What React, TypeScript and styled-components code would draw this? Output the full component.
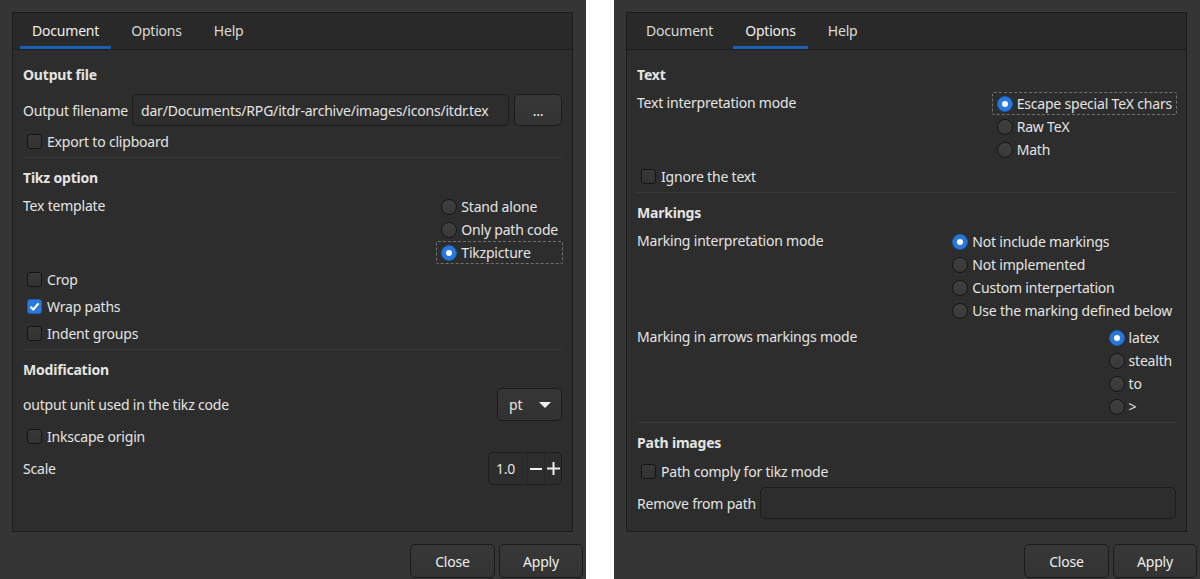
import * as React from "react";
import styled, { createGlobalStyle } from "styled-components";

const GlobalStyle = createGlobalStyle`
  html, body {
    margin: 0;
    padding: 0;
    background: #ffffff;
  }
  body {
    font-family: "Noto Sans", "DejaVu Sans", sans-serif;
    font-size: 14px;
    letter-spacing: -0.2px;
    color: #e4e4e2;
  }
`;

const Page = styled.div`
  width: 1200px;
  height: 579px;
  display: flex;
  justify-content: space-between;
  background: #ffffff;
  overflow: hidden;
`;

const Window = styled.div`
  width: 586px;
  height: 579px;
  box-sizing: border-box;
  padding-top: 12px;
  background: #353535;
  display: flex;
  flex-direction: column;
`;

const Notebook = styled.div`
  height: 520px;
  margin: 0 13px 0 12px;
  box-sizing: border-box;
  border: 1px solid #1c1c1c;
  background: #2d2d2d;
  display: flex;
  flex-direction: column;
`;

const TabBar = styled.div`
  height: 36px;
  display: flex;
  gap: 8px;
  padding: 0 7px;
  background: #292929;
  border-bottom: 1px solid #1c1c1c;
`;

const Tab = styled.div<{ $active?: boolean }>`
  display: flex;
  align-items: center;
  padding: 0 12px 1px;
  color: ${(p) => (p.$active ? "#eeeeec" : "#dadad8")};
  box-shadow: ${(p) => (p.$active ? "inset 0 -3px 0 #1b5fb4" : "none")};
`;

const Content = styled.div`
  flex: 1;
  padding: 5px 10px 0;
  display: flex;
  flex-direction: column;
`;

const Section = styled.div`
  display: flex;
  flex-direction: column;
  gap: 4px;
  padding: 7px 0 4px;
  border-bottom: 1px solid #393939;

  &:last-child {
    border-bottom: none;
  }
`;

const Heading = styled.div`
  height: 24px;
  line-height: 25px;
  font-weight: 700;
  margin-bottom: 2px;
`;

const Row = styled.div<{ $top?: boolean; $mt?: number }>`
  display: flex;
  align-items: ${(p) => (p.$top ? "flex-start" : "center")};
  justify-content: space-between;
  gap: 4px;
  margin-top: ${(p) => p.$mt ?? 0}px;
`;

const Label = styled.div`
  line-height: 21px;
  white-space: nowrap;
`;

const Entry = styled.div`
  flex: 1;
  height: 32px;
  box-sizing: border-box;
  display: flex;
  align-items: center;
  padding: 0 8px;
  border: 1px solid #1c1c1c;
  border-radius: 5px;
  background: #2d2d2d;
  overflow: hidden;
  white-space: nowrap;
`;

const Button = styled.div<{ $w?: number; $h?: number }>`
  width: ${(p) => p.$w ?? 84}px;
  height: ${(p) => p.$h ?? 34}px;
  box-sizing: border-box;
  display: flex;
  align-items: center;
  justify-content: center;
  border: 1px solid #1b1b1b;
  border-radius: 5px;
  background: linear-gradient(#383838, #333333);
  color: #eeeeec;
  flex-shrink: 0;
`;

const CheckRow = styled.label`
  height: 23px;
  display: flex;
  align-items: center;
  gap: 5px;
  padding-left: 4px;
`;

const Box = styled.span<{ $on?: boolean }>`
  width: 15px;
  height: 15px;
  box-sizing: border-box;
  border-radius: 3px;
  border: 1px solid ${(p) => (p.$on ? "#1a5fb4" : "#151515")};
  background: ${(p) => (p.$on ? "#2b78dc" : "linear-gradient(#383838, #323232)")};
  display: flex;
  align-items: center;
  justify-content: center;
`;

const RadioGroup = styled.div`
  display: flex;
  flex-direction: column;
  margin-right: -1px;
`;

const RadioItem = styled.div<{ $focus?: boolean }>`
  height: 23px;
  box-sizing: border-box;
  display: flex;
  align-items: center;
  gap: 4px;
  padding: 0 4px;
  border: 1px ${(p) => (p.$focus ? "dashed rgba(238, 238, 236, 0.35)" : "solid transparent")};
  border-radius: 2px;
  white-space: nowrap;
`;

const Dot = styled.span<{ $on?: boolean }>`
  width: 16px;
  height: 16px;
  box-sizing: border-box;
  border-radius: 50%;
  border: 1px solid ${(p) => (p.$on ? "#1a5fb4" : "#161616")};
  background: ${(p) => (p.$on ? "#2b78dc" : "linear-gradient(#404040, #383838)")};
  display: flex;
  align-items: center;
  justify-content: center;

  &::after {
    content: "";
    width: 6px;
    height: 6px;
    border-radius: 50%;
    background: #ffffff;
    display: ${(p) => (p.$on ? "block" : "none")};
  }
`;

const Combo = styled.div`
  width: 65px;
  height: 33px;
  box-sizing: border-box;
  display: flex;
  align-items: center;
  justify-content: space-between;
  padding: 0 10px 0 11px;
  border: 1px solid #1b1b1b;
  border-radius: 5px;
  background: linear-gradient(#363636, #323232);
`;

const Spin = styled.div`
  height: 33px;
  box-sizing: border-box;
  display: flex;
  border: 1px solid #1c1c1c;
  border-radius: 5px;
  background: #2d2d2d;
`;

const SpinValue = styled.div`
  width: 38px;
  display: flex;
  align-items: center;
  padding-left: 7px;
  box-sizing: border-box;
`;

const SpinButton = styled.div`
  width: 16px;
  display: flex;
  align-items: center;
  justify-content: center;
  border-left: 1px solid #262626;
`;

const ActionBar = styled.div`
  display: flex;
  justify-content: flex-end;
  gap: 4px;
  padding: 12px 3px 0 0;
`;

const Check = ({ on, children }: { on?: boolean; children: React.ReactNode }) => (
  <CheckRow>
    <Box $on={on}>
      {on && (
        <svg width="11" height="11" viewBox="0 0 11 11">
          <path d="M1.5 5.8 L4.3 8.5 L9.6 2.4" stroke="#fff" strokeWidth="2.2" fill="none" strokeLinejoin="round" />
        </svg>
      )}
    </Box>
    {children}
  </CheckRow>
);

interface RadioOption {
  label: string;
  on?: boolean;
  focus?: boolean;
}

const Radios = ({ items }: { items: RadioOption[] }) => (
  <RadioGroup>
    {items.map((it) => (
      <RadioItem key={it.label} $focus={it.focus}>
        <Dot $on={it.on} />
        {it.label}
      </RadioItem>
    ))}
  </RadioGroup>
);

const Tabs = ({ active }: { active: string }) => (
  <TabBar>
    {["Document", "Options", "Help"].map((t) => (
      <Tab key={t} $active={t === active}>
        {t}
      </Tab>
    ))}
  </TabBar>
);

const Actions = () => (
  <ActionBar>
    <Button $w={85}>Close</Button>
    <Button>Apply</Button>
  </ActionBar>
);

const DocumentPanel = () => (
  <Window>
    <Notebook>
      <Tabs active="Document" />
      <Content>
        <Section>
          <Heading>Output file</Heading>
          <Row $mt={2}>
            <Label>Output filename</Label>
            <Entry>dar/Documents/RPG/itdr-archive/images/icons/itdr.tex</Entry>
            <Button $w={48} $h={32} style={{ marginLeft: 1 }}>
              ...
            </Button>
          </Row>
          <Check>Export to clipboard</Check>
        </Section>
        <Section>
          <Heading>Tikz option</Heading>
          <Row $top>
            <Label>Tex template</Label>
            <Radios
              items={[
                { label: "Stand alone" },
                { label: "Only path code" },
                { label: "Tikzpicture", on: true, focus: true },
              ]}
            />
          </Row>
          <Check>Crop</Check>
          <Check on>Wrap paths</Check>
          <Check>Indent groups</Check>
        </Section>
        <Section>
          <Heading>Modification</Heading>
          <Row $mt={1}>
            <Label>output unit used in the tikz code</Label>
            <Combo>
              pt
              <svg width="12" height="6" viewBox="0 0 12 6">
                <polygon points="0,0 12,0 6,6" fill="#eeeeec" />
              </svg>
            </Combo>
          </Row>
          <Check>Inkscape origin</Check>
          <Row>
            <Label>Scale</Label>
            <Spin>
              <SpinValue>1.0</SpinValue>
              <SpinButton>
                <svg width="12" height="12" viewBox="0 0 12 12">
                  <path d="M0 6 H12" stroke="#eeeeec" strokeWidth="2" />
                </svg>
              </SpinButton>
              <SpinButton>
                <svg width="13" height="13" viewBox="0 0 13 13">
                  <path d="M0 6.5 H13 M6.5 0 V13" stroke="#eeeeec" strokeWidth="2" />
                </svg>
              </SpinButton>
            </Spin>
          </Row>
        </Section>
      </Content>
    </Notebook>
    <Actions />
  </Window>
);

const OptionsPanel = () => (
  <Window>
    <Notebook>
      <Tabs active="Options" />
      <Content>
        <Section>
          <Heading>Text</Heading>
          <Row $top>
            <Label>Text interpretation mode</Label>
            <Radios
              items={[
                { label: "Escape special TeX chars", on: true, focus: true },
                { label: "Raw TeX" },
                { label: "Math" },
              ]}
            />
          </Row>
          <Check>Ignore the text</Check>
        </Section>
        <Section>
          <Heading>Markings</Heading>
          <Row $top>
            <Label>Marking interpretation mode</Label>
            <Radios
              items={[
                { label: "Not include markings", on: true },
                { label: "Not implemented" },
                { label: "Custom interpertation" },
                { label: "Use the marking defined below" },
              ]}
            />
          </Row>
          <Row $top>
            <Label>Marking in arrows markings mode</Label>
            <Radios
              items={[
                { label: "latex", on: true },
                { label: "stealth" },
                { label: "to" },
                { label: ">" },
              ]}
            />
          </Row>
        </Section>
        <Section>
          <Heading>Path images</Heading>
          <Check>Path comply for tikz mode</Check>
          <Row>
            <Label>Remove from path</Label>
            <Entry />
          </Row>
        </Section>
      </Content>
    </Notebook>
    <Actions />
  </Window>
);

const App = () => (
  <>
    <GlobalStyle />
    <Page>
      <DocumentPanel />
      <OptionsPanel />
    </Page>
  </>
);

export default App;
